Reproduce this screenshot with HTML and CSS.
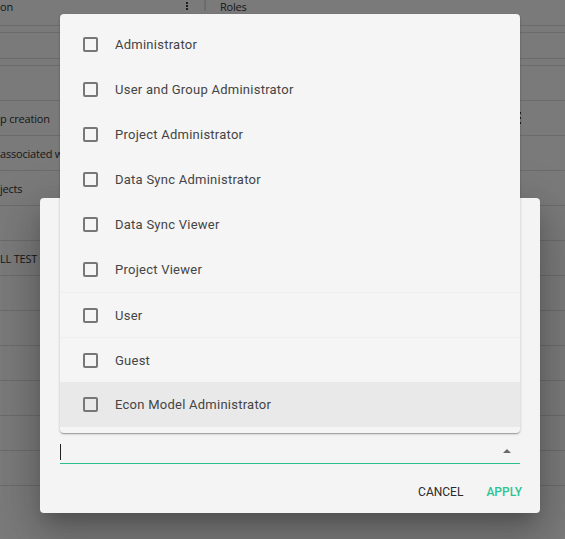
FILE: index.html
```html
<!DOCTYPE html>
<html>
<head>
<meta charset="utf-8">
<link rel="stylesheet" href="styles.css">
</head>
<body>
<div class="table">
  <div class="row head">
    <div class="cell c1">on</div>
    <div class="cell kebab-cell"><span class="kebab"><i></i><i></i><i></i></span></div>
    <div class="cell sep-cell"><span class="sep"></span></div>
    <div class="cell c2">Roles</div>
  </div>
  <div class="row filter"></div>
  <div class="row sub"></div>
  <div class="row gap"></div>
  <div class="row r"></div>
  <div class="row r"><div class="cell c1">p creation</div><div class="cell end"><span class="kebab small"><i></i><i></i><i></i></span></div></div>
  <div class="row r"><div class="cell c1">associated with</div></div>
  <div class="row r"><div class="cell c1">jects</div></div>
  <div class="row r"></div>
  <div class="row r"><div class="cell c1">LL TEST</div></div>
  <div class="row r"></div>
  <div class="row r"></div>
  <div class="row r"></div>
  <div class="row r"></div>
  <div class="row r"></div>
  <div class="row r"></div>
</div>

<div class="dialog">
  <div class="dialog-body"></div>
  <div class="field">
    <span class="caret"></span>
    <span class="arrow"></span>
  </div>
  <div class="actions">
    <button class="btn cancel">Cancel</button>
    <button class="btn apply">Apply</button>
  </div>
</div>

<div class="menu">
  <div class="item"><span class="box"></span><span class="label">Administrator</span></div>
  <div class="item"><span class="box"></span><span class="label">User and Group Administrator</span></div>
  <div class="item"><span class="box"></span><span class="label">Project Administrator</span></div>
  <div class="item"><span class="box"></span><span class="label">Data Sync Administrator</span></div>
  <div class="item"><span class="box"></span><span class="label">Data Sync Viewer</span></div>
  <div class="item"><span class="box"></span><span class="label">Project Viewer</span></div>
  <div class="item divided"><span class="box"></span><span class="label">User</span></div>
  <div class="item divided"><span class="box"></span><span class="label">Guest</span></div>
  <div class="item active"><span class="box"></span><span class="label">Econ Model Administrator</span></div>
</div>
</body>
</html>
```

FILE: styles.css
```css
* { box-sizing: border-box; }
html, body { margin: 0; padding: 0; }
body {
  width: 565px;
  height: 539px;
  overflow: hidden;
  background: #7a7a7a;
  font-family: "Open Sans", "Liberation Sans", sans-serif;
  position: relative;
}

/* background table (under the overlay) */
.table { width: 565px; }
.row {
  display: flex;
  align-items: center;
  border-bottom: 1px solid #6b6b6b;
  font-size: 11px;
  letter-spacing: -0.2px;
  color: #161616;
}
.row.head { height: 26px; align-items: flex-start; }
.row.head .cell { line-height: 13px; }
.row.filter { height: 7px; }
.row.sub { height: 26px; }
.row.gap { height: 7px; }
.row.r { height: 35px; }
.cell.c1 { width: 186px; white-space: nowrap; overflow: hidden; }
.row.r .cell.c1 { width: 400px; }
.kebab-cell { width: 18px; padding-top: 2px; }
.kebab { display: flex; flex-direction: column; gap: 1px; width: 2px; }
.kebab i { display: block; width: 2px; height: 2px; background: #1e1e1e; }
.sep-cell { width: 16px; }
.sep { display: block; width: 2px; height: 11px; background: #6c6c6c; }
.cell.end { margin-left: auto; width: 46px; display: flex; }
.kebab.small { gap: 3px; }

/* dialog */
.dialog {
  position: absolute;
  left: 40px;
  top: 198px;
  width: 500px;
  height: 315px;
  background: #f4f4f4;
  border-radius: 4px;
  box-shadow: 0 11px 15px -7px rgba(0,0,0,0.2), 0 24px 38px 3px rgba(0,0,0,0.14), 0 9px 46px 8px rgba(0,0,0,0.12);
  display: flex;
  flex-direction: column;
  padding: 0 20px;
}
.dialog-body { height: 240px; }
.field {
  height: 26px;
  border-bottom: 1px solid #2bbd8e;
  display: flex;
  align-items: center;
  justify-content: space-between;
  padding-right: 9px;
}
.caret { display: block; width: 1px; height: 16px; background: #222; margin-top: 2px; }
.arrow {
  display: block;
  width: 0; height: 0;
  border-left: 4px solid transparent;
  border-right: 4px solid transparent;
  border-bottom: 4px solid #6a6a6a;
  margin-top: 1px;
}
.actions {
  display: flex;
  justify-content: flex-end;
  gap: 7px;
  margin-top: 10px;
  margin-right: -10px;
}
.btn {
  font-family: Roboto, "Liberation Sans", sans-serif;
  font-size: 12px;
  text-transform: uppercase;
  background: none;
  border: 0;
  padding: 0 8px;
  height: 36px;
  cursor: pointer;
}
.btn.cancel { color: #2a2a2a; font-weight: 400; }
.btn.apply { color: #2ac593; font-weight: 500; }

/* dropdown menu */
.menu {
  position: absolute;
  left: 60px;
  top: 14px;
  width: 460px;
  padding: 8px 0 6px;
  background: #f5f5f5;
  border-radius: 4px;
  box-shadow: 0 1px 3px rgba(0,0,0,0.2), 0 1px 1px rgba(0,0,0,0.14), 0 2px 1px -1px rgba(0,0,0,0.12);
}
.item {
  height: 45px;
  display: flex;
  align-items: center;
  padding-left: 23px;
  font-family: Roboto, "Liberation Sans", sans-serif;
  font-size: 13px;
  letter-spacing: 0.25px;
  color: #444;
}
.item.divided { border-top: 1px solid #efefef; }
.item.active { background: #e9e9e9; }
.box {
  width: 15px;
  height: 15px;
  border: 2px solid #777;
  border-radius: 2px;
  margin-right: 17px;
  flex: none;
}
```
